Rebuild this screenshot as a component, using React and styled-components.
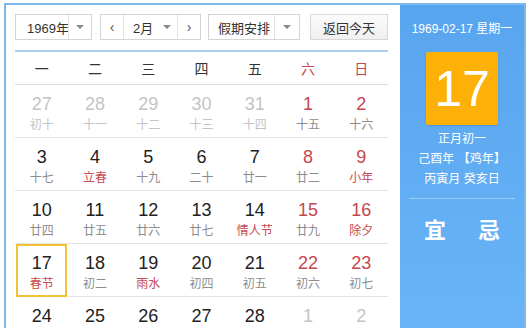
import React from "react"
import styled, { createGlobalStyle } from "styled-components"

const GlobalStyle = createGlobalStyle`
  html, body {
    margin: 0;
    padding: 0;
    background: #fff;
    overflow: hidden;
  }
  body {
    font-family: "Liberation Sans", "Noto Sans CJK SC", sans-serif;
  }
`

const Frame = styled.div`
  display: flex;
  box-sizing: border-box;
  width: 522px;
  height: 340px;
  margin: 3px 0 0 4px;
  border: 2px solid #7db9ec;
  border-bottom: none;
`

const Main = styled.div`
  box-sizing: border-box;
  width: 394px;
  padding: 9px 12px 0 9px;
`

const Toolbar = styled.div`
  display: flex;
  align-items: center;
  height: 26px;
  padding-bottom: 10px;
  border-bottom: 2px solid #a9cdee;
`

const SelectBox = styled.div`
  display: flex;
  box-sizing: border-box;
  width: ${(p) => p.$w}px;
  height: 26px;
  margin-right: ${(p) => p.$mr || 0}px;
  border: 1px solid #d4d4d4;
  background: #fff;
  font-size: 13px;
  color: #333;
  white-space: nowrap;
`

const SelectText = styled.div`
  flex: 1;
  min-width: 0;
  display: flex;
  align-items: center;
  padding-left: ${(p) => p.$pl || 9}px;
`

const ArrowCell = styled.div`
  display: flex;
  align-items: center;
  justify-content: center;
  flex: none;
  width: ${(p) => p.$w || 22}px;
  border-left: ${(p) => (p.$noline ? "none" : "1px solid #e2e2e2")};
  border-right: ${(p) => (p.$rline ? "1px solid #e2e2e2" : "none")};
  color: #555;
  font-size: 14px;
`

const Caret = styled.span`
  width: 0;
  height: 0;
  border-left: 4px solid transparent;
  border-right: 4px solid transparent;
  border-top: 4px solid #888;
`

const TodayButton = styled.div`
  display: flex;
  align-items: center;
  justify-content: center;
  box-sizing: border-box;
  width: 78px;
  height: 26px;
  border: 1px solid #d8d8d8;
  background: linear-gradient(#fbfbfb, #efefef);
  font-size: 13px;
  color: #333;
`

const Grid = styled.div`
  display: grid;
  grid-template-columns: repeat(7, 1fr);
`

const HeadCell = styled.div`
  display: flex;
  align-items: center;
  justify-content: center;
  height: 32px;
  border-bottom: 1px solid #dcdcdc;
  font-size: 14px;
  color: ${(p) => (p.$red ? "#c5474f" : "#333")};
`

const DayCell = styled.div`
  box-sizing: border-box;
  height: 53px;
  padding-top: ${(p) => (p.$sel ? 6 : 8)}px;
  border: ${(p) => (p.$sel ? "2px solid #f2c232" : "none")};
  border-bottom: ${(p) => (p.$sel ? "2px solid #f2c232" : "1px solid #e2e2e2")};
  margin: ${(p) => (p.$sel ? "0 1px" : 0)};
  text-align: center;
`

const DayNum = styled.div`
  font-size: 18px;
  line-height: 22px;
  color: ${(p) => (p.$muted ? "#c4c4c4" : p.$red ? "#c5474f" : "#222")};
`

const Lunar = styled.div`
  font-size: 12px;
  line-height: 16px;
  margin-top: 2px;
  color: ${(p) => (p.$muted ? "#c4c4c4" : p.$red ? "#c84a50" : "#8c8c8c")};
`

const Panel = styled.div`
  flex: 1;
  display: flex;
  flex-direction: column;
  align-items: center;
  background: linear-gradient(#58a5ef, #6ab5f8);
  color: #fff;
`

const PanelDate = styled.div`
  margin-top: 16px;
  font-size: 12px;
  line-height: 16px;
`

const BigDay = styled.div`
  display: flex;
  align-items: center;
  justify-content: center;
  width: 72px;
  height: 73px;
  margin-top: 15px;
  border-radius: 2px;
  background: #fdb106;
  box-shadow: 0 1px 2px rgba(0, 0, 0, 0.15);
  font-size: 50px;
  color: #fff;
`

const LunarInfo = styled.div`
  margin-top: 4px;
  font-size: 12px;
  line-height: 20px;
  text-align: center;
`

const Divider = styled.div`
  align-self: stretch;
  height: 1px;
  margin: 9px 9px 0;
  background: #9ccbf6;
`

const YiJi = styled.div`
  display: flex;
  gap: 32px;
  margin-top: 13px;
  font-size: 22px;
  font-weight: bold;
`

const weekdays = ["一", "二", "三", "四", "五", "六", "日"]

const rows = [
  [
    ["27", "初十", "m"], ["28", "十一", "m"], ["29", "十二", "m"], ["30", "十三", "m"],
    ["31", "十四", "m"], ["1", "十五", "r"], ["2", "十六", "r"],
  ],
  [
    ["3", "十七"], ["4", "立春", "h"], ["5", "十九"], ["6", "二十"],
    ["7", "廿一"], ["8", "廿二", "r"], ["9", "小年", "rh"],
  ],
  [
    ["10", "廿四"], ["11", "廿五"], ["12", "廿六"], ["13", "廿七"],
    ["14", "情人节", "h"], ["15", "廿九", "r"], ["16", "除夕", "rh"],
  ],
  [
    ["17", "春节", "hs"], ["18", "初二"], ["19", "雨水", "h"], ["20", "初四"],
    ["21", "初五"], ["22", "初六", "r"], ["23", "初七", "r"],
  ],
  [
    ["24", "初八"], ["25", "初九"], ["26", "初十"], ["27", "十一"],
    ["28", "十二"], ["1", "十三", "m"], ["2", "十四", "m"],
  ],
]

export default function App() {
  return (
    <>
      <GlobalStyle />
      <Frame>
        <Main>
          <Toolbar>
            <SelectBox $w={77} $mr={8}>
              <SelectText $pl={11}>1969年</SelectText>
              <ArrowCell><Caret /></ArrowCell>
            </SelectBox>
            <SelectBox $w={101} $mr={7}>
              <ArrowCell $w={22} $noline $rline>&lsaquo;</ArrowCell>
              <SelectText>2月</SelectText>
              <ArrowCell $w={20} $noline><Caret /></ArrowCell>
              <ArrowCell $w={22}>&rsaquo;</ArrowCell>
            </SelectBox>
            <SelectBox $w={92} $mr={10}>
              <SelectText>假期安排</SelectText>
              <ArrowCell $w={24}><Caret /></ArrowCell>
            </SelectBox>
            <TodayButton>返回今天</TodayButton>
          </Toolbar>
          <Grid>
            {weekdays.map((w, i) => (
              <HeadCell key={w} $red={i > 4}>{w}</HeadCell>
            ))}
            {rows.flat().map(([num, lunar, flag = ""], i) => {
              const muted = flag.includes("m")
              const red = flag.includes("r")
              return (
                <DayCell key={i} $sel={flag.includes("s")}>
                  <DayNum $muted={muted} $red={red}>{num}</DayNum>
                  <Lunar $muted={muted} $red={flag.includes("h")}>{lunar}</Lunar>
                </DayCell>
              )
            })}
          </Grid>
        </Main>
        <Panel>
          <PanelDate>1969-02-17 星期一</PanelDate>
          <BigDay>17</BigDay>
          <LunarInfo>
            正月初一
            <br />
            己酉年 【鸡年】
            <br />
            丙寅月 癸亥日
          </LunarInfo>
          <Divider />
          <YiJi>
            <span>宜</span>
            <span>忌</span>
          </YiJi>
        </Panel>
      </Frame>
    </>
  )
}
